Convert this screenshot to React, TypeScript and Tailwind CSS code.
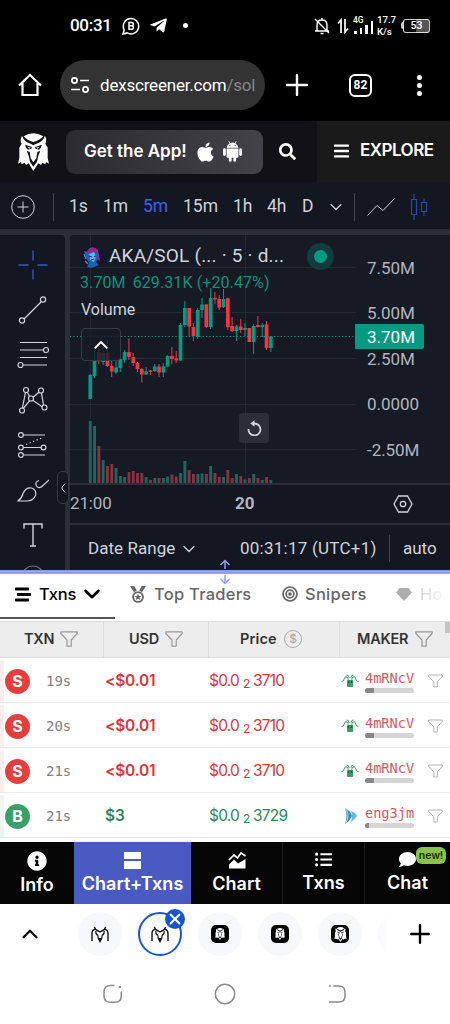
import { ReactNode } from "react";
import { FaApple, FaSearch, FaBars, FaStream, FaInfoCircle, FaComment, FaTelegramPlane, FaListUl } from "react-icons/fa";
import { ChevronDown, ChevronUp, Plus, X } from "lucide-react";

// [wick top, body top, body bottom, wick bottom, up, volume height]
type Candle = [number, number, number, number, number, number];

const CANDLES: Candle[] = [
  [374, 375, 399, 399, 1, 62], [350, 360, 376, 378, 1, 57], [342, 352, 361, 364, 0, 37], [346, 353, 362, 365, 1, 23],
  [340, 353, 366, 367, 0, 17], [361, 366, 371.5, 377, 0, 19], [360, 367.5, 372.5, 374, 1, 15], [357, 359, 368, 372, 1, 7],
  [350, 352, 360, 363, 1, 6], [338.5, 352, 357, 360, 0, 11], [353, 357, 363, 366, 0, 12], [362, 363, 369, 372, 0, 10],
  [368, 369, 374.5, 382.5, 0, 10], [367, 371.5, 374.5, 375, 1, 6], [370, 370.5, 372, 375, 0, 3], [364, 366.5, 371, 372, 1, 5],
  [364, 366.5, 372.5, 377, 0, 5], [363, 366.5, 372.5, 377, 1, 5], [355, 356, 366.5, 367, 1, 6.5], [347, 356, 359, 364, 0, 8.5],
  [351, 358.5, 360.5, 363, 0, 6.5], [323, 325, 360.5, 361, 1, 10], [301, 308, 325, 327, 1, 22], [308, 308, 326.5, 336, 0, 13],
  [323, 327, 336, 341, 0, 9], [308, 310, 337, 339, 1, 9], [298, 304.5, 310, 318, 1, 9.5], [304, 304.5, 327, 328, 0, 9],
  [288, 298, 327, 329, 1, 17], [292, 298, 299.5, 304, 0, 10], [295, 299, 307.5, 310, 0, 6], [289, 299, 307, 308, 1, 6],
  [297.5, 298.5, 327, 330, 0, 13], [317, 326, 331, 332, 0, 5], [325, 326.5, 331, 341, 1, 9], [319, 326.5, 330, 333, 0, 7],
  [323, 328, 330, 336, 1, 3.5], [328, 328, 342, 342, 0, 5], [324, 326, 342, 354, 1, 9], [316, 325, 327, 327.5, 0, 5],
  [323, 325, 327, 337, 1, 3], [321, 324.5, 348, 350, 0, 6], [336, 336.5, 348, 352, 1, 3],
];

const TXNS = [
  { side: "S", age: "19s", usd: "<$0.01", price: "3710", maker: "4mRNcV", fish: false },
  { side: "S", age: "20s", usd: "<$0.01", price: "3710", maker: "4mRNcV", fish: false },
  { side: "S", age: "21s", usd: "<$0.01", price: "3710", maker: "4mRNcV", fish: false },
  { side: "B", age: "21s", usd: "$3", price: "3729", maker: "eng3jm", fish: true },
];

function Funnel({ className }: { className?: string }) {
  return (
    <svg viewBox="0 0 18 16" className={className} fill="none" stroke="currentColor" strokeWidth="1.2" strokeLinejoin="round">
      <path d="M.8.8h16.4v1.7L11.2 9v6.2H7V9L.8 2.5z" />
    </svg>
  );
}

function AndroidRobot() {
  return (
    <svg viewBox="0 0 19 21" className="ml-[8px] h-[21px] w-[19px]" fill="currentColor">
      <path d="M3.600 6.800Q4 3.700 6.600 2.200L5.500.4L6 .1L7.200 1.900Q9.500 1.100 11.800 1.900L13 .1L13.500.4L12.400 2.200Q15 3.700 15.400 6.800Z" />
      <path d="M3.600 7.500H15.400V15.500Q15.400 16.700 14.200 16.700H4.800Q3.600 16.700 3.600 15.500Z" />
      <rect x="0" y="7.200" width="2.800" height="7.800" rx="1.400" />
      <rect x="16.200" y="7.200" width="2.800" height="7.800" rx="1.400" />
      <rect x="5.900" y="14" width="2.700" height="6.800" rx="1.350" />
      <rect x="10.400" y="14" width="2.700" height="6.800" rx="1.350" />
      <circle cx="6.900" cy="4.600" r=".6" fill="#3a3a40" />
      <circle cx="12.100" cy="4.600" r=".6" fill="#3a3a40" />
    </svg>
  );
}

function Owl({ className }: { className?: string }) {
  return (
    <svg viewBox="0 0 93 114" className={className} fill="currentColor">
      <path d="M17 10Q46-9 76 10Q66 22 46 27Q27 22 17 10Z" />
      <path d="M12 8Q18 26 38 32L46 37L55 32Q75 26 81 8Q86 17 84 27L82 32L89 44V75L93 92L84 87L82 94L73 89L69 96L61 91L46 114L32 91L24 96L20 89L11 94L9 87L0 92L4 75V44L11 32L8 27Q7 17 12 8Z" />
      <path d="M21 35L42 42L40 47L30 50Q23 44 21 35ZM72 35L51 42L53 47L63 50Q70 44 72 35Z" fill="#111116" />
      <path d="M28 41L39 44L34 47ZM65 41L54 44L59 47Z" />
      <path d="M26 53L35 57L38 76L46 88L55 76L58 57L67 53L61 68L57 86L46 101L36 86L32 68Z" fill="#111116" />
      <path d="M46 44L55 62L46 82L38 62Z" />
    </svg>
  );
}

// outline owl used as favicon in the tab strip
function WingOwl() {
  return (
    <svg viewBox="0 0 18 17" className="h-[17px] w-[18px]" fill="none" stroke="#111" strokeWidth="1.400">
      <path d="M1 15V7.500Q1 3.600 4.600 3.300M17 15V7.500Q17 3.600 13.400 3.300" />
      <path d="M3.300.8Q4 3.600 7.200 5L9 6L10.800 5Q14 3.600 14.700.8" />
      <path d="M4.800 5Q4.600 8.600 6.800 9.200L7.300 12.500L9 15.500L10.700 12.500L11.200 9.200Q13.400 8.600 13.200 5" strokeWidth="1.200" />
      <path d="M7.200 12L9 16.800L10.800 12Z" fill="#111" stroke="none" />
    </svg>
  );
}

function DarkOwl({ large }: { large?: boolean }) {
  return (
    <span className="flex h-[18px] w-[18px] items-center justify-center rounded-[5px] bg-black text-white">
      <Owl className={large ? "h-[15px] w-[13px]" : "h-[12px] w-[10px]"} />
    </span>
  );
}

function StatusBar() {
  return (
    <div className="flex h-[51px] items-center pl-[70px] text-white">
      <span className="w-[52px] text-[17px] font-medium tracking-[-0.300px]">00:31</span>
      <svg viewBox="0 0 18 18" className="h-[18px] w-[18px]" fill="none" stroke="white" strokeWidth="1.5">
        <path d="M1 17L2.200 12.800A7.700 7.700 0 1 1 5.200 15.900Z" />
        <path d="M7 5.500H9.700A1.600 1.600 0 0 1 9.700 8.800H7ZM7 8.800H10A1.800 1.800 0 0 1 10 12.300H7Z" />
      </svg>
      <FaTelegramPlane className="ml-[9px] h-[19px] w-[19px]" />
      <span className="ml-[15px] h-[5px] w-[5px] rounded-full bg-white" />
      <svg viewBox="0 0 16 18" className="ml-[126px] h-[18px] w-[16px]" fill="none" stroke="white" strokeWidth="1.400">
        <path d="M3 14V8Q3 3 8 3Q13 3 13 8V14M1 14H15M1 2L15 16M8 1V3M6.500 16.500H9.500" />
      </svg>
      <svg viewBox="0 0 12 16" className="ml-[7px] h-[16px] w-[12px]" fill="none" stroke="white" strokeWidth="1.700">
        <path d="M4 15V2L1 5.500M8 1V14L11 10.500" />
      </svg>
      <div className="ml-[4px] flex w-[21px] flex-col">
        <span className="h-[8px] text-[8.500px] leading-[6px] font-medium">4G</span>
        <div className="-mt-[4px] flex items-end gap-[3px] pl-[1px]">
          <i className="h-[3px] w-[2.500px] bg-white" />
          <i className="h-[6px] w-[2.500px] bg-white" />
          <i className="h-[9px] w-[2.500px] bg-white" />
          <i className="h-[13px] w-[2.500px] bg-white" />
        </div>
      </div>
      <div className="ml-[3px] w-[24px] text-[9.800px] leading-[12px] font-medium tracking-[-0.100px]">
        <p>17.7</p>
        <p>K/s</p>
      </div>
      <div className="h-[7px] w-[2px] rounded-l bg-white/80" />
      <div className="flex h-[14px] w-[27px] items-center justify-center rounded-[3px] border border-white/80 bg-gradient-to-r from-black from-50% to-[#555] to-50% text-[10.500px] font-medium">53</div>
    </div>
  );
}

function BrowserBar() {
  return (
    <div className="flex h-[70px] items-center pb-[2px] text-white">
      <svg viewBox="0 0 24 24" className="ml-[18px] h-[24px] w-[24px]" fill="none" stroke="white" strokeWidth="2.200">
        <path d="M1 12.500L12 2L23 12.500M4.500 10V22H19.500V10" />
      </svg>
      <div className="ml-[18px] flex h-[50px] w-[205px] items-center rounded-full bg-[#333334] pl-[11px]">
        <svg viewBox="0 0 18 16" className="h-[16px] w-[18px]" fill="none" stroke="white" strokeWidth="1.700">
          <circle cx="3.500" cy="3.500" r="2.600" />
          <circle cx="14.500" cy="12.500" r="2.600" />
          <path d="M9 3.500H18M0 12.500H9" />
        </svg>
        <span className="ml-[11px] pt-[2px] text-[17px] tracking-[-0.200px] whitespace-nowrap">
          dexscreener.com<span className="text-[#858586]">/sol</span>
        </span>
      </div>
      <Plus className="ml-[15px] h-[34px] w-[34px]" strokeWidth={1.700} />
      <div className="ml-[35px] flex h-[23px] w-[23px] items-center justify-center rounded-[6px] border-2 border-white text-[12px] font-bold">82</div>
      <div className="ml-[45px] flex flex-col gap-[3px]">
        <i className="h-[5px] w-[5px] rounded-full bg-white" />
        <i className="h-[5px] w-[5px] rounded-full bg-white" />
        <i className="h-[5px] w-[5px] rounded-full bg-white" />
      </div>
    </div>
  );
}

function SiteHeader() {
  return (
    <header className="flex h-[61px] items-center bg-[#111116] font-[Inter,sans-serif] font-semibold text-white">
      <Owl className="ml-[18px] h-[38px] w-[31px]" />
      <div className="ml-[17px] flex h-[44px] w-[197px] items-center rounded-[9px] bg-gradient-to-r from-[#2b2b31] to-[#424248] pl-[18px]">
        <span className="w-[112px] text-[17px] tracking-[-0.020px] whitespace-nowrap">Get the App!</span>
        <FaApple className="h-[22px] w-[19px]" />
        <AndroidRobot />
      </div>
      <FaSearch className="ml-[16px] h-[17px] w-[17px]" />
      <div className="ml-auto flex h-full w-[133px] items-center bg-[#1a1a1a] pb-[2px] pl-[17px]">
        <FaBars className="h-[18px] w-[15px]" />
        <span className="ml-[11px] text-[17px] tracking-[-0.500px]">EXPLORE</span>
      </div>
    </header>
  );
}

function Toolbar() {
  return (
    <div className="flex h-[47px] items-center bg-[#131722] pt-[2px] text-[17.500px] text-[#cfd2da]">
      <svg viewBox="0 0 24 24" className="ml-[11px] h-[24px] w-[24px]" fill="none" stroke="currentColor">
        <circle cx="12" cy="12" r="11.300" />
        <path d="M12 6.500V17.500M6.500 12H17.500" />
      </svg>
      <i className="mr-[15px] ml-[18px] h-[28px] w-px bg-[#434651]" />
      <span className="w-[34px]">1s</span>
      <span className="w-[40px]">1m</span>
      <span className="w-[40px] text-[#3c62e8]">5m</span>
      <span className="w-[50px]">15m</span>
      <span className="w-[34px]">1h</span>
      <span className="w-[35px]">4h</span>
      <span className="w-[24px]">D</span>
      <ChevronDown className="h-[20px] w-[20px]" strokeWidth={1.500} />
      <i className="ml-[8px] h-[28px] w-px bg-[#434651]" />
      <svg viewBox="0 0 28 18" className="ml-[12px] h-[18px] w-[28px]" fill="none" stroke="currentColor">
        <path d="M.5 17.500L10 7.500L16 12.500L27.500.5" />
      </svg>
      <svg viewBox="0 0 18 26" className="ml-[15px] h-[26px] w-[18px]" fill="none" stroke="#2b4a9e" strokeWidth="1.200">
        <path d="M1.500 5.500H6.500V20.500H1.500ZM4 0V5.500M4 20.500V26M11.500 8.500H16.500V17.500H11.500ZM14 4.500V8.500M14 17.500V22" />
      </svg>
    </div>
  );
}

function DrawingTools() {
  return (
    <div className="h-[335px] w-[65px] shrink-0 overflow-hidden rounded-tr-[4px] bg-[#131722]">
      <div className="flex flex-col items-center gap-[15px] pt-[15px] text-[#d1d4dc]">
        <svg viewBox="0 0 30 30" className="h-[30px] w-[30px]" stroke="#3557d6" strokeWidth="1.300">
          <path d="M15 .5V10.500M15 19.500V29.500M.5 15H10.500M19.500 15H29.500" />
        </svg>
        <svg viewBox="0 0 30 30" className="h-[30px] w-[30px]" fill="none" stroke="currentColor" strokeWidth="1.200">
          <path d="M6 24L23 7" />
          <circle cx="4" cy="25.500" r="2.600" />
          <circle cx="25" cy="4.500" r="2.600" />
        </svg>
        <svg viewBox="0 0 32 30" className="h-[30px] w-[32px]" fill="none" stroke="currentColor" strokeWidth="1.200">
          <path d="M3 2.500H30M3 10H27M3 17.500H30M6 25H30" />
          <circle cx="29" cy="10" r="2.500" fill="#131722" />
          <circle cx="3.500" cy="25" r="2.500" fill="#131722" />
        </svg>
        <svg viewBox="0 0 30 30" className="h-[30px] w-[30px]" fill="none" stroke="currentColor" strokeWidth="1.200">
          <path d="M4 25L8 5L13 14L23 5.500L26 23L13 14L4 25" />
          <circle cx="8" cy="5" r="2.500" fill="#131722" />
          <circle cx="23" cy="5.500" r="2.500" fill="#131722" />
          <circle cx="13" cy="13.500" r="2.500" fill="#131722" />
          <circle cx="4" cy="25.500" r="2.500" fill="#131722" />
          <circle cx="26.500" cy="22.500" r="2.500" fill="#131722" />
        </svg>
        <svg viewBox="0 0 30 30" className="h-[30px] w-[30px]" fill="none" stroke="currentColor" strokeWidth="1.200">
          <path d="M4 5H27M4 17.500H24M4 25H27" />
          <path d="M8 14.500L25 7.500" strokeDasharray="1.300 2.500" />
          <circle cx="2.900" cy="5" r="2.400" fill="#131722" />
          <circle cx="2.900" cy="17.500" r="2.400" fill="#131722" />
          <circle cx="25.500" cy="17.500" r="2.400" fill="#131722" />
          <circle cx="2.900" cy="25" r="2.400" fill="#131722" />
        </svg>
        <svg viewBox="0 0 32 30" className="h-[30px] w-[32px]" fill="none" stroke="currentColor" strokeWidth="1.200">
          <path d="M1 26Q5 23 6 18.500Q9 12 14.500 13Q20 15 18.500 20.500Q16 26 10 26ZM22 5.500Q17.500 7 19.500 11Q22 14.500 26 10.500L32 5" />
        </svg>
        <svg viewBox="0 0 30 30" className="h-[30px] w-[30px]" fill="none" stroke="currentColor" strokeWidth="1.400">
          <path d="M6 8.500V4H24V8.500M15 4V26M12 26H18" />
        </svg>
        <svg viewBox="0 0 30 30" className="h-[30px] w-[30px]" fill="none" stroke="#6a6d78" strokeWidth="1.200">
          <circle cx="15" cy="12" r="11" />
        </svg>
      </div>
    </div>
  );
}

function PriceChart() {
  return (
    <svg viewBox="70 235 380 248" className="block h-[248px] w-[380px]">
      <g stroke="#242834">
        {[267.500, 312.500, 358.500, 404.500, 449.500].map(y => <path key={y} d={`M70 ${y}H356`} />)}
        <path d="M90.500 235V484M245.500 235V484" />
      </g>
      {CANDLES.map(([high, top, bottom, low, up, volume], i) => {
        const x = 90.200 + i * 4.300;
        return (
          <g key={i}>
            <rect x={x - 1.400} y={483 - volume} width="2.900" height={volume} fill={up ? "#1c665d" : "#843343"} />
            <rect x={x - 0.500} y={high} width="1" height={low - high} fill={up ? "#089981" : "#f23645"} />
            <rect x={x - 1.800} y={top} width="3.700" height={bottom - top} fill={up ? "#089981" : "#f23645"} />
          </g>
        );
      })}
      <path d="M70 336.500H355" stroke="#089981" strokeDasharray="1.200 2.200" />
    </svg>
  );
}

function TokenAvatar() {
  return (
    <svg viewBox="0 0 22 22" className="h-[22px] w-[22px]">
      <circle cx="11" cy="11" r="11" fill="#17152d" />
      <path d="M3 5L7 6Q11 0 16 4L18 8L17 13L15 16L18 19L11 22L6 21L8 17L5 12Z" fill="#1f5fae" />
      <path d="M6 5Q11-2 17 4L17 8L12 5L8 8ZM18 7L16 13L19 15Z" fill="#a3228a" />
      <path d="M8 8L13 6L15 10L13 16L9 14Z" fill="#58bce9" />
      <path d="M3 8L5 13M4 15L7 18" stroke="#2e9bd0" strokeWidth="1.200" />
      <path d="M8 10L11 11M13 10.500L15 10M10 14L13 13" stroke="#241a65" />
    </svg>
  );
}

function ChartPanel() {
  return (
    <section className="relative flex h-[341px] items-end gap-[5px] bg-[#2a2e39] text-[#d1d4dc]">
      <DrawingTools />
      <div className="relative h-[335px] w-[380px] overflow-hidden rounded-tl-[4px] bg-[#161a25]">
        <PriceChart />
        <div className="flex h-[40px] items-center border-t-2 border-[#2a2e39] bg-[#131722] text-[17px] text-[#b2b5be]">
          <span className="w-[165px] tracking-[-0.150px]">21:00</span>
          <span className="font-bold">20</span>
          <svg viewBox="0 0 20 18" className="ml-[138px] h-[18px] w-[20px]" fill="none" stroke="#d1d4dc" strokeWidth="1.300">
            <path d="M5.500 1H14.500L19 9L14.500 17H5.500L1 9Z" />
            <circle cx="10" cy="9" r="2.700" />
          </svg>
        </div>
        <div className="flex h-[47px] items-center border-t-2 border-[#2a2e39] bg-[#131722] pt-[2px] pl-[18px] text-[17px] whitespace-nowrap">
          <span className="w-[91px] tracking-[0.050px]">Date Range</span>
          <ChevronDown className="h-[20px] w-[20px]" strokeWidth={1.500} />
          <span className="ml-[41px] w-[149px] tracking-[0.250px]">00:31:17 (UTC+1)</span>
          <i className="h-[27px] w-px bg-[#434651]" />
          <span className="ml-[13px]">auto</span>
        </div>

        {/* legend over the plot */}
        <div className="absolute top-[10px] left-[11px]">
          <div className="flex h-[23px] items-center gap-[6px]">
            <TokenAvatar />
            <span className="w-[184px] text-[19px] tracking-[0.200px] whitespace-nowrap">AKA/SOL (... · 5 · d...</span>
            <span className="ml-[8px] flex h-[27px] w-[27px] items-center justify-center rounded-full bg-[#143b40]">
              <i className="h-[13px] w-[13px] rounded-full bg-[#089981]" />
            </span>
          </div>
          <p className="mt-[4px] -ml-[1px] h-[22px] text-[16px] leading-[22px] tracking-[0.100px] whitespace-nowrap text-[#12917d]">
            3.70M<span className="ml-[7px]">629.31K (+20.47%)</span>
          </p>
          <p className="mt-[5px] text-[16px] leading-[22px]">Volume</p>
          <div className="mt-[7px] flex h-[33px] w-[40px] items-center justify-center rounded-[4px] border border-[#363a45] bg-[#161a25]/80">
            <svg viewBox="0 0 14 8" className="h-[8px] w-[14px]" fill="none" stroke="white" strokeWidth="1.900">
              <path d="M.7 7.300L7 1L13.300 7.300" />
            </svg>
          </div>
        </div>

        {/* price axis labels */}
        <div className="absolute top-[23px] left-[297px] text-[17px] leading-[20px] tracking-[-0.050px] text-[#b2b5be]">
          <p className="mb-[25px]">7.50M</p>
          <p className="mb-[26px]">5.00M</p>
          <p className="mb-[25px]">2.50M</p>
          <p className="mb-[26px]">0.0000</p>
          <p>-2.50M</p>
        </div>
        <div className="absolute top-[89px] left-[285px] flex h-[25px] w-[69px] items-center rounded-r-[2px] bg-[#089981] pt-[2px] pl-[12px] text-[17px] text-white">3.70M</div>
        <div className="absolute top-[178px] left-[169px] flex h-[30px] w-[30px] items-center justify-center rounded-[4px] bg-[#2a2e39]">
          <svg viewBox="0 0 15 16" className="h-[16px] w-[15px]" fill="none" stroke="#d1d4dc" strokeWidth="1.800">
            <path d="M1.500 9A6 6 0 1 0 7.500 3.500H6" />
            <path d="M7.500.3V6.700L3.300 3.500Z" fill="#d1d4dc" stroke="none" />
          </svg>
        </div>
      </div>
      <div className="absolute top-[242px] left-[57px] flex h-[33px] w-[12px] items-center justify-center rounded-[5px] border border-[#363a45] bg-[#131722]">
        <svg viewBox="0 0 5 10" className="h-[10px] w-[5px]" fill="none" stroke="#d1d4dc">
          <path d="M4 .5L1.200 4Q.8 5 1.200 6L4 9.500" />
        </svg>
      </div>
    </section>
  );
}

function PanelTabs() {
  return (
    <div className="relative">
      <div className="h-[4px] bg-[#929ef0]" />
      <svg viewBox="0 0 12 26" className="absolute -top-[11px] left-[219px] h-[26px] w-[12px]" fill="none" stroke="#929ef0" strokeWidth="1.500">
        <path d="M1.500 6L6 1.500L10.500 6M6 2V10M1.500 20L6 24.500L10.500 20M6 16V24" />
      </svg>
      <div className="flex h-[46px] items-center overflow-hidden bg-white pb-[6px] font-[Inter,sans-serif] text-[16.500px] font-medium tracking-[0.250px] whitespace-nowrap text-[#666]">
        <div className="flex w-[115px] shrink-0 items-center pl-[15px] text-black">
          <FaStream className="h-[17px] w-[16px]" />
          <span className="ml-[8px] w-[37px] tracking-[-0.200px]">Txns</span>
          <ChevronDown className="ml-[3px] h-[26px] w-[26px]" strokeWidth={2.300} />
        </div>
        <svg viewBox="0 0 16 17" className="ml-[15px] h-[17px] w-[16px] shrink-0" fill="currentColor">
          <path d="M0 0H4.200L6.800 4.500L4 6.200ZM16 0H11.800L9.200 4.500L12 6.200Z" />
          <circle cx="8" cy="11" r="4.900" fill="none" stroke="currentColor" strokeWidth="1.900" />
          <path d="M8 7.700L9 9.900L11.300 10.100L9.600 11.600L10.100 13.900L8 12.700L5.900 13.900L6.400 11.600L4.700 10.100L7 9.900Z" />
        </svg>
        <span className="ml-[8px] w-[98px]">Top Traders</span>
        <svg viewBox="0 0 16 16" className="ml-[30px] h-[16px] w-[16px] shrink-0" fill="none" stroke="currentColor" strokeWidth="1.700">
          <circle cx="8" cy="8" r="7" />
          <circle cx="8" cy="8" r="3.900" />
          <circle cx="8" cy="8" r="1" fill="currentColor" />
        </svg>
        <span className="ml-[7px] w-[63px]">Snipers</span>
        <svg viewBox="0 0 16 13" className="ml-[28px] h-[13px] w-[16px] shrink-0 text-[#adadad]" fill="currentColor">
          <path d="M3.500 0H12.500L16 4.500L8 13L0 4.500Z" />
        </svg>
        <span className="ml-[8px] bg-gradient-to-r from-[#d5d5d5] to-[#f8f8f8] bg-clip-text text-transparent">Ho</span>
      </div>
      <div className="-mt-[3px] h-[2px] w-[115px] bg-[#555]" />
    </div>
  );
}

function TxnTable() {
  return (
    <div className="h-[223px] overflow-hidden bg-white pt-[2px]">
      <div className="relative flex h-[37px] items-center border-y border-[#dcdcdc] bg-[#ededed] font-[Inter,sans-serif] text-[14.500px] font-semibold tracking-[-0.200px] text-[#333]">
        <div className="flex h-full w-[104px] items-center border-r border-[#dcdcdc] pb-[2px] pl-[24px]">
          <span className="w-[36px]">TXN</span>
          <Funnel className="h-[16px] w-[18px] text-[#999]" />
        </div>
        <div className="flex h-full w-[105px] items-center border-r border-[#dcdcdc] pb-[2px] pl-[25px]">
          <span className="w-[36px]">USD</span>
          <Funnel className="h-[16px] w-[18px] text-[#999]" />
        </div>
        <div className="flex h-full w-[131px] items-center border-r border-[#dcdcdc] pb-[2px] pl-[31px]">
          <span className="w-[44px] tracking-[0.150px]">Price</span>
          <span className="flex h-[18px] w-[18px] items-center justify-center rounded-full border-[1.500px] border-[#aaa] text-[12px] font-medium text-[#aaa]">$</span>
        </div>
        <div className="flex h-full items-center pb-[2px] pl-[17px]">
          <span className="w-[58px]">MAKER</span>
          <Funnel className="h-[16px] w-[18px] text-[#999]" />
        </div>
        <div className="absolute top-0 right-0 h-[11px] w-[5px] bg-[#c4c4c4]" />
      </div>
      {TXNS.map((txn, i) => {
        const buy = txn.side === "B";
        return (
          <div key={i} className="flex h-[45px] items-center border-b border-[#ececec] pt-[2px]">
            <i className={`h-full w-[4px] ${buy ? "bg-[#edf7f2]" : "bg-[#fdeeee]"}`} />
            <span className={`ml-[1px] flex h-[25px] w-[25px] items-center justify-center rounded-full font-[Inter,sans-serif] text-[16px] font-bold text-white ${buy ? "bg-[#38a169]" : "bg-[#e53e3e]"}`}>{txn.side}</span>
            <span className="ml-[16px] w-[59px] font-['DejaVu_Sans_Mono',monospace] text-[14px] text-[#808080]">{txn.age}</span>
            <span className={`w-[104px] font-[Inter,sans-serif] text-[15.500px] font-semibold tracking-[-0.200px] ${buy ? "text-[#2f855a]" : "text-[#d9363b]"}`}>{txn.usd}</span>
            <span className={`flex w-[131px] items-center font-[Inter,sans-serif] text-[15.500px] tracking-[-0.800px] ${buy ? "text-[#2f855a]" : "text-[#d9363b]"}`}>
              <span className="w-[34px]">$0.0</span>
              <span className="w-[10px] pt-[6px] text-[12px]">2</span>
              {txn.price}
            </span>
            {txn.fish ? (
              <svg viewBox="0 0 18 16" className="ml-px h-[16px] w-[18px]">
                <path d="M4 0Q10 3 11 8Q9 13 4 16Q7 8 4 0Z" fill="#3c91bd" />
                <path d="M10 3Q15 5 16 8Q14 11 10 14Q12 8 10 3Z" fill="#65b8dc" />
                <path d="M5 1Q9 7 5 15" fill="none" stroke="#a5dbed" />
              </svg>
            ) : (
              <svg viewBox="0 0 18 14" className="ml-px h-[14px] w-[18px]" fill="none" stroke="#38a169" strokeWidth="1">
                <path d="M.5 7.500Q2.500 8 3.200 5Q4 1.500 6 3Q7.200 4 7.200 6M17.500 7.500Q15.500 8 14.800 5Q14 1.500 12 3Q10.800 4 10.800 6M5.500 1Q7.500.5 8.200 4M12.500 1Q10.500.5 9.800 4" />
                <rect x="6" y="6" width="6.200" height="7" rx="1" fill="#3b9b65" stroke="none" />
                <path d="M7.700 7V9M10.600 7V9" stroke="#164c30" />
              </svg>
            )}
            <div className="ml-[6px] w-[50px]">
              <p className="font-['DejaVu_Sans_Mono',monospace] text-[13.600px] leading-[16px] text-[#e0555c]">{txn.maker}</p>
              <div className="mt-[2px] h-[5px] w-[49px] overflow-hidden rounded-full bg-[#d5d5d5]">
                <i className={`block h-full bg-[#888] ${txn.fish ? "w-[4px]" : "w-[9px]"}`} />
              </div>
            </div>
            <Funnel className="ml-[13px] h-[14px] w-[15px] text-[#b5b5b5]" />
          </div>
        );
      })}
    </div>
  );
}

function NavItem({ icon, label, className }: { icon: ReactNode; label: string; className: string }) {
  return (
    <div className={`relative flex h-full flex-col items-center ${className}`}>
      <span className="flex h-[20px] items-center">{icon}</span>
      <span className="text-[18px] leading-[27px] tracking-[0.050px] whitespace-nowrap">{label}</span>
    </div>
  );
}

function BottomNav() {
  return (
    <nav className="flex h-[62px] bg-[#050505] font-[Inter,sans-serif] font-semibold text-white">
      <NavItem className="w-[74px] pt-[9px]" label="Info" icon={<FaInfoCircle className="h-[20px] w-[20px]" />} />
      <NavItem
        className="w-[117px] bg-[#495bc2] pt-[8px]"
        label="Chart+Txns"
        icon={
          <span className="flex flex-col gap-[2px]">
            <i className="h-[7.500px] w-[17px] bg-white" />
            <i className="h-[7.500px] w-[17px] bg-white" />
          </span>
        }
      />
      <NavItem
        className="w-[92px] border-r border-[#1c1c1c] pt-[8px]"
        label="Chart"
        icon={
          <svg viewBox="0 0 18 17" className="h-[17px] w-[18px]" fill="currentColor">
            <path d="M1 16.500V12.500L6 7.500L10 11.500L17.500 7V16.500Z" />
            <path d="M1 8L6 3L9.500 6L13 1L17.500 4" fill="none" stroke="currentColor" strokeWidth="1.700" />
          </svg>
        }
      />
      <NavItem className="w-[82px] border-r border-[#1c1c1c] pt-[7px]" label="Txns" icon={<FaListUl className="h-[17px] w-[17px]" />} />
      <div className="relative w-[85px]">
        <NavItem className="pt-[7px]" label="Chat" icon={<FaComment className="h-[17px] w-[17px]" />} />
        <span className="absolute top-[5px] right-[4px] flex h-[17px] w-[30px] items-center justify-center rounded-[6px] bg-[#8bc34a] text-[10.500px] tracking-[-0.100px] text-[#1c2b10]">new!</span>
      </div>
    </nav>
  );
}

function TabStrip() {
  return (
    <div className="flex h-[60px] items-center bg-white">
      <ChevronUp className="ml-[17px] h-[26px] w-[26px] text-black" strokeWidth={2} />
      <div className="ml-[35px] flex items-center gap-[16px]">
        <span className="flex h-[44px] w-[44px] items-center justify-center rounded-full bg-[#f7f8fc]"><WingOwl /></span>
        <span className="relative flex h-[44px] w-[44px] items-center justify-center rounded-full border-2 border-[#1556cf] bg-white">
          <WingOwl />
          <span className="absolute -top-[5px] -right-[5px] flex h-[20px] w-[20px] items-center justify-center rounded-full bg-[#1556cf]">
            <X className="h-[18px] w-[18px] text-white" strokeWidth={2.500} />
          </span>
        </span>
        <span className="flex h-[44px] w-[44px] items-center justify-center rounded-full bg-[#f7f8fc]"><DarkOwl /></span>
        <span className="flex h-[44px] w-[44px] items-center justify-center rounded-full bg-[#f7f8fc]"><DarkOwl /></span>
        <span className="flex h-[44px] w-[44px] items-center justify-center rounded-full bg-[#f7f8fc]"><DarkOwl large /></span>
        <span className="h-[44px] w-[10px] overflow-hidden">
          <i className="block h-[44px] w-[44px] rounded-full bg-gradient-to-r from-[#f7f8fc] to-white to-25%" />
        </span>
      </div>
      <Plus className="ml-[17px] h-[30px] w-[30px] text-black" strokeWidth={1.900} />
    </div>
  );
}

function SystemNav() {
  return (
    <div className="flex h-[60px] items-center bg-white">
      <svg viewBox="0 0 20 20" className="ml-[103px] h-[20px] w-[20px]" fill="none" stroke="#8a8a8a" strokeWidth="1.500">
        <path d="M11.500 1.500H7.500Q1 1.500 1 8V12Q1 18.300 7.500 18.300H12Q18.300 18.300 18.300 12V7.500" />
        <path d="M15.800 3H17.800" strokeWidth="2" />
      </svg>
      <svg viewBox="0 0 22 22" className="ml-[91px] h-[22px] w-[22px]" fill="none" stroke="#8a8a8a" strokeWidth="1.500">
        <circle cx="11" cy="11" r="9.700" />
      </svg>
      <svg viewBox="0 0 18 20" className="ml-[92px] h-[20px] w-[18px]" fill="none" stroke="#8a8a8a" strokeWidth="1.500">
        <path d="M5.500 2H11Q17 2 17 8V12Q17 18 11 18H1M1 2H3" />
      </svg>
    </div>
  );
}

export default function App() {
  return (
    <div className="h-[1024px] w-[450px] overflow-hidden bg-black font-[Roboto,sans-serif]">
      <StatusBar />
      <BrowserBar />
      <SiteHeader />
      <Toolbar />
      <ChartPanel />
      <PanelTabs />
      <TxnTable />
      <BottomNav />
      <TabStrip />
      <SystemNav />
    </div>
  );
}
